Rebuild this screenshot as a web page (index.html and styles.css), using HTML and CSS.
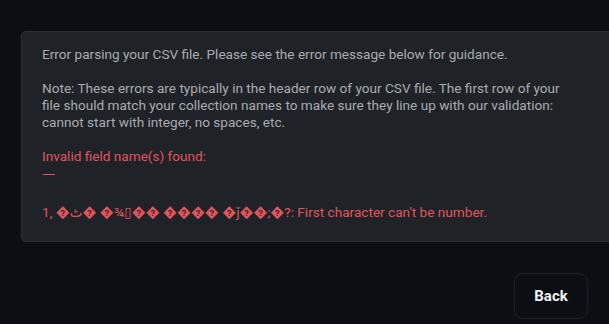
FILE: index.html
```html
<!DOCTYPE html>
<html lang="en">
<head>
<meta charset="utf-8">
<title>CSV error</title>
<link rel="stylesheet" href="styles.css">
</head>
<body>
<main class="page">
  <section class="card">
    <p class="msg">Error parsing your CSV file. Please see the error message below for guidance.</p>
    <p class="msg">Note: These errors are typically in the header row of your CSV file. The first row of your file should match your collection names to make sure they line up with our validation: cannot start with integer, no spaces, etc.</p>
    <p class="err">Invalid field name(s) found:<br><span class="dash">—</span></p>
    <p class="err last">1, �ٹ� �¾▯�� ���� �ǰ��;�?: First character can't be number.</p>
  </section>
  <div class="actions">
    <button class="back">Back</button>
  </div>
</main>
</body>
</html>
```
FILE: styles.css
```css
html, body {
  margin: 0;
  padding: 0;
  background: #0b0e12;
  overflow: hidden;
}
.page {
  padding: 31px 0 0 21px;
  font-family: Roboto, "DejaVu Sans", sans-serif;
}
.card {
  width: 620px;
  box-sizing: border-box;
  background: #1f2327;
  border: 1px solid #2b2f34;
  border-radius: 5px;
  padding: 14px 20px 20px 20px;
}
.msg, .err {
  margin: 0 0 17px 0;
  font-size: 13.6px;
  line-height: 17px;
  width: 524px;
}
.msg { color: #a8abb0; }
.err { color: #e0545d; }
.dash { font-family: "DejaVu Sans", sans-serif; font-size: 13px; }
.err.last { margin: 22px 0 0 0; }
.actions {
  display: flex;
  justify-content: flex-end;
  padding: 31px 21px 0 0;
}
.back {
  width: 74px;
  height: 46px;
  background: #0b0e12;
  border: 1.5px solid #1e2227;
  border-radius: 9px;
  color: #f2f3f5;
  font-family: Roboto, sans-serif;
  font-weight: 700;
  font-size: 15px;
}
```
